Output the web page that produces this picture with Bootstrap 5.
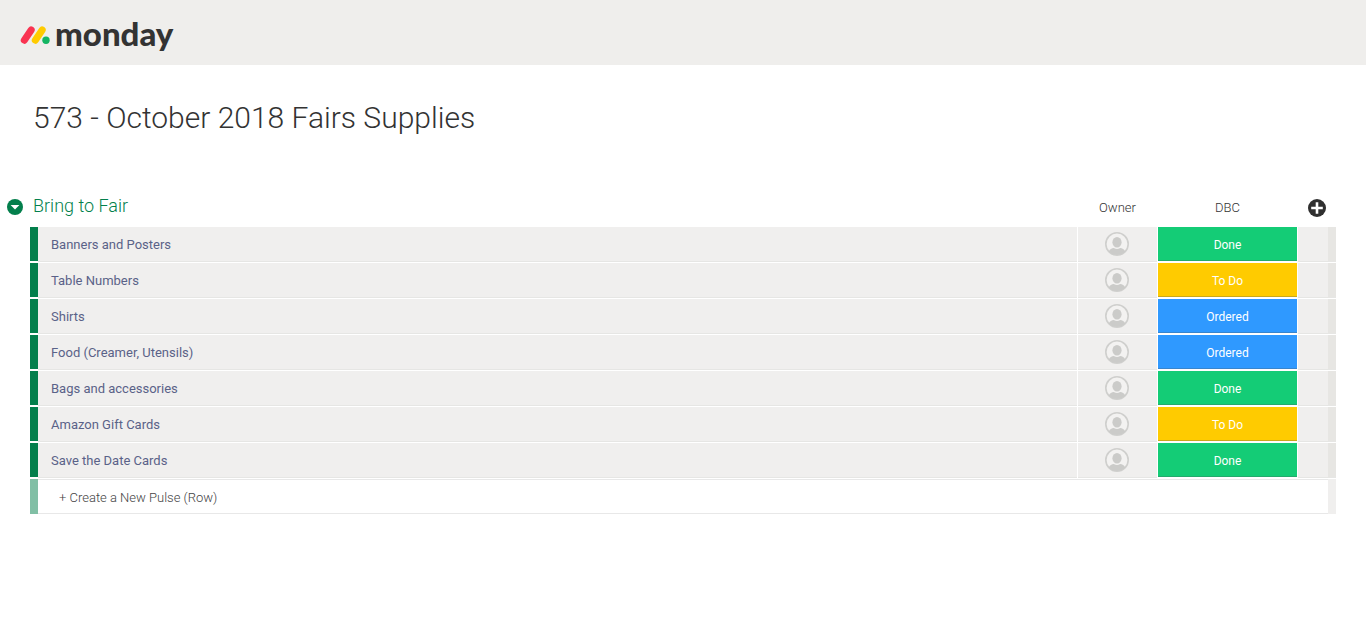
<!DOCTYPE html>
<html lang="en">
<head>
<meta charset="utf-8">
<meta name="viewport" content="width=device-width, initial-scale=1">
<title>573 - October 2018 Fairs Supplies</title>
<link href="https://cdn.jsdelivr.net/npm/bootstrap@5.3.0/dist/css/bootstrap.min.css" rel="stylesheet">
<style>
  body { font-family: Roboto, sans-serif; color: #333; background: #fff; font-size: 13px; }
  .topbar { background: #efeeec; height: 65px; padding: 0 20px; }
  .brand { gap: 5px; color: #333; font-family: Lato, sans-serif; font-weight: 900; font-size: 33px; line-height: 40px; }
  .board-title { font-size: 30px; font-weight: 300; line-height: 40px; padding: 33px 33px 48px; }
  .board { padding: 0 30px; }
  .pulses { table-layout: fixed; border-collapse: separate; border-spacing: 0; }
  .pulses th, .pulses td { padding: 0; height: 36px; vertical-align: middle; }
  .pulses thead th { height: 41px; font-weight: 300; padding: 2px 1px 0 0; }
  .pulses thead .add-head { padding-right: 0; }
  .group-head { margin-left: -23px; gap: 10px; padding-bottom: 2px; }
  .group-name { color: #037f4c; font-size: 18px; font-weight: 300; line-height: 24px; padding-bottom: 2px; }
  .icon-btn { line-height: 0; }
  .c-bar, .c-end { width: 8px; }
  .c-owner { width: 80px; }
  .c-status { width: 140px; }
  .c-add { width: 30px; }
  .pulse td, .pulse th {
    background: #f0efee; border-bottom: 1px solid #fff; box-shadow: inset 0 -1px #e6e6e4;
    color: #5a6288; font-weight: 400; line-height: 20px;
  }
  .pulses .pulse .bar { background: #037f4c; border-bottom: 2px solid #fff; box-shadow: none; }
  .pulses .pulse .item { padding-left: 13px; }
  .pulses .pulse .owner { padding: 0 1px 1px 0; }
  .pulses .pulse .item, .pulses .pulse .owner, .pulses .pulse .state { border-right: 1px solid #fff; }
  .pulses .pulse .end { background: #e7e6e3; }
  .pulses .pulse .state { border-bottom: 2px solid #fff; box-shadow: none; }
  .status { height: 34px; padding: 2px 0 0; color: #fff; font-size: 12px; box-shadow: inset 0 -1px rgba(80, 90, 90, .3); }
  .done { background: #14cc76; }
  .todo { background: #ffcb00; }
  .ordered { background: #2f99ff; }
  .pulses .new-pulse td { height: 35px; }
  .pulses .new-pulse .bar { background: #81bfa5; }
  .pulses .new-pulse .end { background: #f0efee; }
  .new-input { height: 35px; padding: 2px 21px 0; font-weight: 300; border: solid #e8e8e8; border-width: 1px 0; color: #333; outline: 0; }
  .new-input::placeholder { color: #444; opacity: 1; }
</style>
</head>
<body>
<header class="topbar d-flex align-items-center">
  <a href="#" class="brand d-flex align-items-center text-decoration-none">
    <svg width="30" height="24" viewBox="0 0 30 24" aria-hidden="true" fill="none" stroke-width="7" stroke-linecap="round">
      <path d="M4.300 19.200 11.200 9" stroke="#f93351"/>
      <path d="M15.300 19.200 22.200 9" stroke="#ffcb00"/>
      <circle cx="26" cy="19.200" r="3.700" fill="#14b563"/>
    </svg>
    <span>monday</span>
  </a>
</header>

<main>
  <h1 class="board-title m-0">573 - October 2018 Fairs Supplies</h1>
  <section class="board">
    <table class="pulses w-100">
      <colgroup>
        <col class="c-bar"><col><col class="c-owner"><col class="c-status"><col class="c-add"><col class="c-end">
      </colgroup>
      <thead>
        <tr>
          <th colspan="2" scope="col">
            <div class="group-head d-flex align-items-center">
              <button type="button" class="icon-btn border-0 bg-transparent p-0" aria-label="Collapse group">
                <svg width="16" height="16" viewBox="0 0 16 16"><circle cx="8" cy="8" r="8" fill="#037f4c"/><path d="M3.600 6H12.400L8 10.500Z" fill="#fff"/></svg>
              </button>
              <span class="group-name">Bring to Fair</span>
            </div>
          </th>
          <th scope="col" class="text-center">Owner</th>
          <th scope="col" class="text-center">DBC</th>
          <th colspan="2" class="add-head text-center">
            <button type="button" class="icon-btn border-0 bg-transparent p-0" aria-label="Add column">
              <svg width="18" height="18" viewBox="0 0 18 18"><circle cx="9" cy="9" r="9" fill="#2f2f2f"/><path d="M9 3.200V14.800M3.200 9H14.800" stroke="#fff" stroke-width="2.600"/></svg>
            </button>
          </th>
        </tr>
      </thead>
      <tbody id="rows"></tbody>
      <tfoot>
        <tr class="new-pulse">
          <td class="bar"></td>
          <td colspan="4"><input class="new-input d-block w-100 rounded-0" type="text" placeholder="+ Create a New Pulse (Row)" aria-label="Create a new pulse"></td>
          <td class="end"></td>
        </tr>
      </tfoot>
    </table>
  </section>
</main>

<template id="pulse">
  <tr class="pulse">
    <td class="bar"></td>
    <th class="item" scope="row"></th>
    <td class="owner text-center">
      <button type="button" class="icon-btn border-0 bg-transparent p-0" aria-label="Assign owner">
        <svg width="24" height="24" viewBox="0 0 24 24">
          <circle cx="12" cy="12" r="11.200" fill="#f3f2f1" stroke="#cfcfcd" stroke-width="1.600"/>
          <ellipse cx="12" cy="10.200" rx="4.600" ry="5.200" fill="#cbcbc9"/>
          <path d="M3.800 19.500C4.500 17.600 7 16.300 8.800 16.100Q12 18 15.200 16.100C17 16.300 19.500 17.600 20.200 19.500A11.200 11.200 0 0 1 3.800 19.500Z" fill="#cbcbc9"/>
        </svg>
      </button>
    </td>
    <td class="state"><button type="button" class="status d-block w-100 border-0"></button></td>
    <td></td>
    <td class="end"></td>
  </tr>
</template>

<script src="https://cdn.jsdelivr.net/npm/bootstrap@5.3.0/dist/js/bootstrap.bundle.min.js"></script>
<script>
  const pulses = [
    ['Banners and Posters', 'Done'],
    ['Table Numbers', 'To Do'],
    ['Shirts', 'Ordered'],
    ['Food (Creamer, Utensils)', 'Ordered'],
    ['Bags and accessories', 'Done'],
    ['Amazon Gift Cards', 'To Do'],
    ['Save the Date Cards', 'Done']
  ];
  const tint = { 'Done': 'done', 'To Do': 'todo', 'Ordered': 'ordered' };
  for (const [name, state] of pulses) {
    const row = document.getElementById('pulse').content.cloneNode(true);
    row.querySelector('.item').textContent = name;
    const status = row.querySelector('.status');
    status.textContent = state;
    status.classList.add(tint[state]);
    document.getElementById('rows').append(row);
  }
</script>
</body>
</html>
